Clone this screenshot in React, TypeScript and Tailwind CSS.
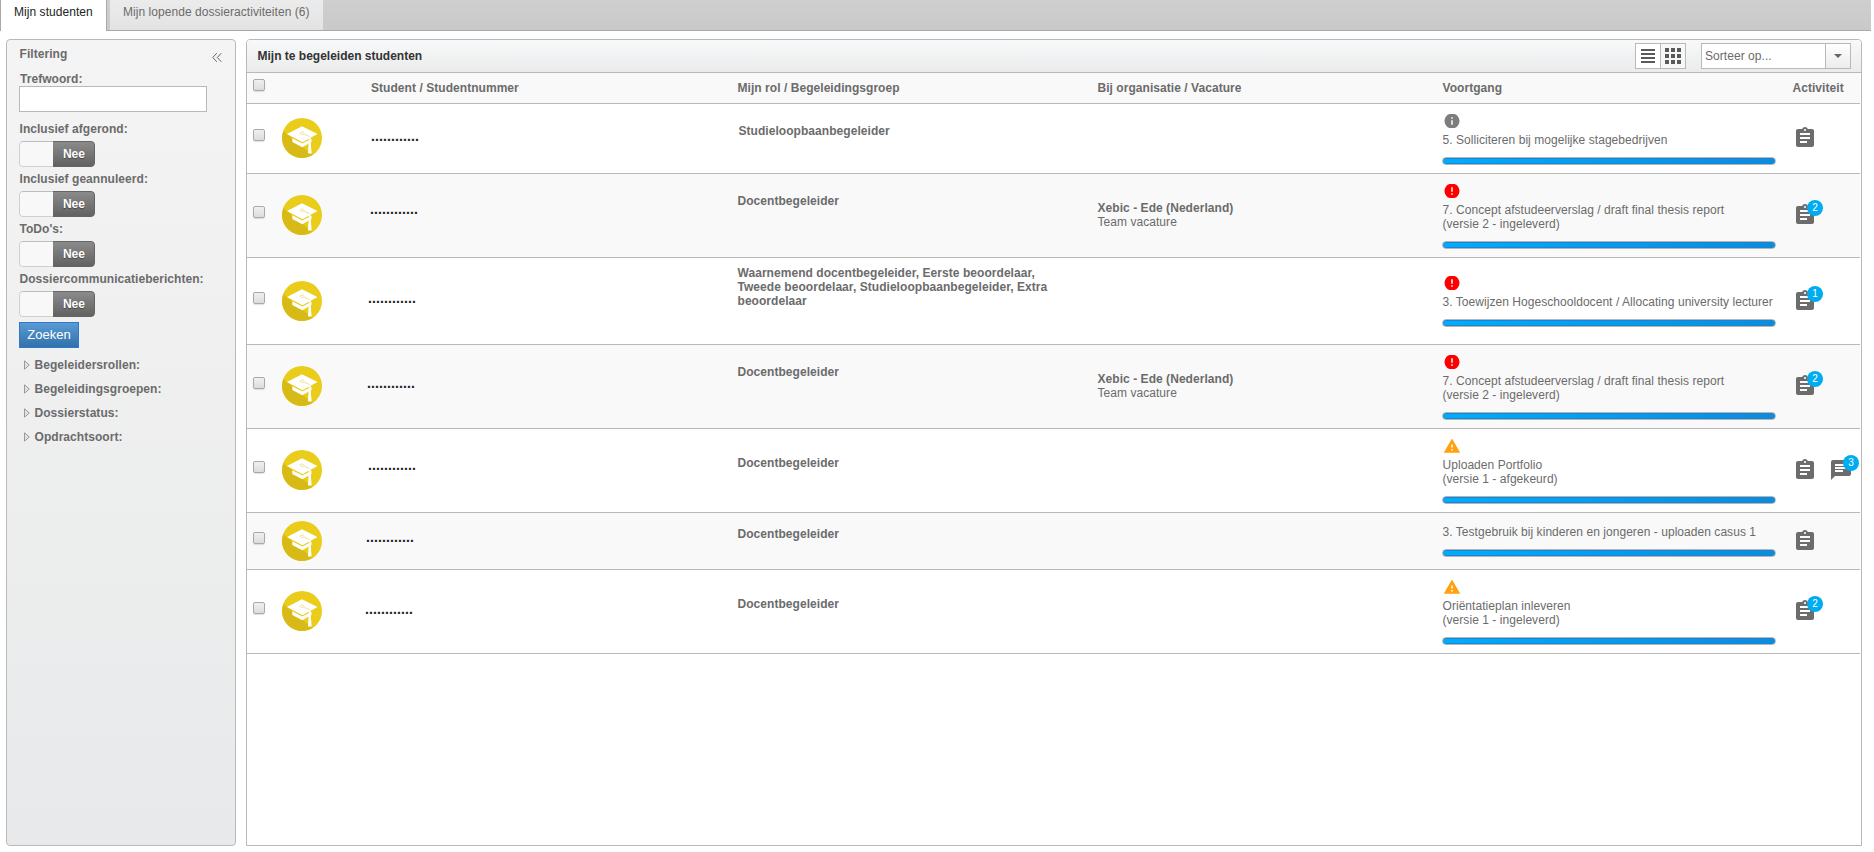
import { MdAssignment, MdChat, MdError, MdInfo, MdWarning } from 'react-icons/md';

type Status = 'info' | 'error' | 'warning' | null;

interface StudentRow {
  height: string;
  pad: string;
  namePad: string;
  role: string;
  rolePad: string;
  organisation?: string;
  vacancy?: string;
  status: Status;
  progress: string[];
  progressPad: string;
  tasks?: number;
  messages?: number;
}

const rows: StudentRow[] = [
  {
    height: 'h-[70px]',
    pad: 'pt-[14px]',
    namePad: 'pt-[25px] -ml-px',
    role: 'Studieloopbaanbegeleider',
    rolePad: 'pt-[20px] pl-px',
    status: 'info',
    progress: ['5. Solliciteren bij mogelijke stagebedrijven'],
    progressPad: 'pt-[10px]',
  },
  {
    height: 'h-[84px]',
    pad: 'pt-[21px]',
    namePad: 'pt-[28px] -ml-[2px]',
    role: 'Docentbegeleider',
    rolePad: 'pt-[20px]',
    organisation: 'Xebic - Ede (Nederland)',
    vacancy: 'Team vacature',
    status: 'error',
    progress: ['7. Concept afstudeerverslag / draft final thesis report', '(versie 2 - ingeleverd)'],
    progressPad: 'pt-[10px]',
    tasks: 2,
  },
  {
    height: 'h-[87px]',
    pad: 'pt-[23px]',
    namePad: 'pt-[33px] -ml-[4px]',
    role: 'Waarnemend docentbegeleider, Eerste beoordelaar, Tweede beoordelaar, Studieloopbaanbegeleider, Extra beoordelaar',
    rolePad: 'pt-[8px]',
    status: 'error',
    progress: ['3. Toewijzen Hogeschooldocent / Allocating university lecturer'],
    progressPad: 'pt-[18px]',
    tasks: 1,
  },
  {
    height: 'h-[84px]',
    pad: 'pt-[21px]',
    namePad: 'pt-[31px] -ml-[5px]',
    role: 'Docentbegeleider',
    rolePad: 'pt-[20px]',
    organisation: 'Xebic - Ede (Nederland)',
    vacancy: 'Team vacature',
    status: 'error',
    progress: ['7. Concept afstudeerverslag / draft final thesis report', '(versie 2 - ingeleverd)'],
    progressPad: 'pt-[10px]',
    tasks: 2,
  },
  {
    height: 'h-[84px]',
    pad: 'pt-[21px]',
    namePad: 'pt-[29px] -ml-[4px]',
    role: 'Docentbegeleider',
    rolePad: 'pt-[27px]',
    status: 'warning',
    progress: ['Uploaden Portfolio', '(versie 1 - afgekeurd)'],
    progressPad: 'pt-[10px]',
    messages: 3,
  },
  {
    height: 'h-[57px]',
    pad: 'pt-[8px]',
    namePad: 'pt-[17px] -ml-[6px]',
    role: 'Docentbegeleider',
    rolePad: 'pt-[14px]',
    status: null,
    progress: ['3. Testgebruik bij kinderen en jongeren - uploaden casus 1'],
    progressPad: 'pt-[12px]',
  },
  {
    height: 'h-[84px]',
    pad: 'pt-[21px]',
    namePad: 'pt-[32px] -ml-[7px]',
    role: 'Docentbegeleider',
    rolePad: 'pt-[27px]',
    status: 'warning',
    progress: ['Oriëntatieplan inleveren', '(versie 1 - ingeleverd)'],
    progressPad: 'pt-[10px]',
    tasks: 2,
  },
];

const toggles = ['Inclusief afgerond:', 'Inclusief geannuleerd:', "ToDo's:", 'Dossiercommunicatieberichten:'];
const groups = ['Begeleidersrollen:', 'Begeleidingsgroepen:', 'Dossierstatus:', 'Opdrachtsoort:'];

const columns =
  'grid grid-cols-[35px_90px_365.5px_360px_344.5px_350.5px_67.5px] w-[1613px] shrink-0 border-b border-[#b9b9b9]';

function Checkbox() {
  return (
    <span className="block w-3 h-3 rounded-[2px] border border-[#a9a9a9] bg-linear-to-b from-[#f0f0f0] to-[#dcdcdc] shadow-[0_1px_1px_rgba(0,0,0,0.12)]" />
  );
}

function StudentAvatar() {
  return (
    <svg width="40" height="40" viewBox="0 0 40 40">
      <circle cx="20" cy="20" r="20" fill="#e9cd1a" />
      <path d="M5 16 L1.3 13 A20 20 0 0 0 31 36.7 L28 35 Z" fill="#d8ba17" />
      <path d="M20 8.2 L35.5 16 L20.5 24.2 L5 16 Z" fill="#fff" />
      <path d="M10.3 20.2 L20.3 25.5 L29.5 20.7 V24 L20.3 29.3 L10.3 24 Z" fill="#fff" />
      <path d="M18.5 15.5 c-1-1.6 2.5-2 3.5-.6 s-2.6 2.6-3.5.6 M22.5 16.5 l6 2.4" fill="none" stroke="#e9d877" strokeWidth="0.8" />
      <path d="M27 18.6 L28.4 18.6 L29.6 35.5 H26 Z" fill="#fff" />
    </svg>
  );
}

function StatusIcon({ status }: { status: Status }) {
  if (!status) return null;
  return (
    <div className="flex items-center h-[14px] mb-[5px] pl-[0.5px] overflow-hidden">
      {status === 'info' && <MdInfo size={18} className="shrink-0 text-[#7d7d7d]" />}
      {status === 'error' && <MdError size={18} className="shrink-0 text-[#ff0000]" />}
      {status === 'warning' && <MdWarning size={18} className="shrink-0 text-[#ffa20d]" />}
    </div>
  );
}

function Badge({ count }: { count: number }) {
  return (
    <span className="absolute left-[14px] -top-[3px] w-4 h-4 rounded-full bg-[#00acf0] text-white text-[10px] leading-4 text-center">
      {count}
    </span>
  );
}

function Toggle() {
  return (
    <div className="flex w-[76px] h-[26px] rounded-[4px] overflow-hidden">
      <div className="w-[34px] rounded-l-[4px] border border-r-0 border-[#cfcfcf] border-t-[#bdbdbd] bg-[#f8f8f8]" />
      <div className="flex-1 rounded-r-[4px] border border-l-0 border-[#656565] bg-linear-to-b from-[#8b8b8b] to-[#626262] text-white font-bold leading-6 text-center pl-px [text-shadow:0_1px_1px_#444]">
        Nee
      </div>
    </div>
  );
}

function FilterPanel() {
  return (
    <aside className="w-[230px] h-[807px] shrink-0 border border-[#b9b9b9] rounded-[4px] bg-linear-to-b from-[#f4f4f4] to-[#e8e9ea] px-3 font-bold">
      <div className="flex justify-between pt-[7px] h-[32px]">
        <span className="pl-[0.5px]">Filtering</span>
        <svg className="mt-[6px] mr-px" width="10" height="9" viewBox="0 0 10 9" fill="none" stroke="#666">
          <path d="M4.8 0.2 L0.8 4.5 L4.8 8.8 M9.3 0.2 L5.3 4.5 L9.3 8.8" />
        </svg>
      </div>
      <label className="block pl-px leading-[14px]">Trefwoord:</label>
      <div className="w-[188px] h-[26px] border border-[#b9b9b9] bg-white mb-[10px]" />
      {toggles.map((label) => (
        <div key={label} className="h-[50px]">
          <div className="leading-[14px] mb-[5px] pl-[0.5px]">{label}</div>
          <Toggle />
        </div>
      ))}
      <button className="block w-[60px] h-[26px] border border-[#2f77cf] bg-linear-to-b from-[#5b9bd3] to-[#3071aa] text-white text-[13px] leading-6 font-normal">
        Zoeken
      </button>
      <ul className="pt-[5px]">
        {groups.map((group) => (
          <li key={group} className="flex items-center h-6 pl-[5px] gap-[4.5px]">
            <svg width="6" height="10" viewBox="0 0 6 10" fill="#e2e2e2" stroke="#9a9a9a">
              <path d="M0.5 0.8 L5.3 5 L0.5 9.2 Z" />
            </svg>
            {group}
          </li>
        ))}
      </ul>
    </aside>
  );
}

function Toolbar() {
  return (
    <div className="flex items-center h-[33px] shrink-0 rounded-t-[3px] border-b border-[#b9b9b9] bg-linear-to-b from-[#f7f9fa] to-[#ebebeb] px-[10px]">
      <h2 className="flex-1 font-bold text-[#333] tracking-normal pb-px pl-[0.5px]">Mijn te begeleiden studenten</h2>
      <div className="flex w-[51px] h-[26px] border border-[#b9b9b9] mr-[15px] bg-white">
        <div className="w-[25px] flex items-center justify-center border-r border-[#b9b9b9]">
          <svg width="14" height="14" viewBox="0 0 14 14" fill="#5a5a5a" shapeRendering="crispEdges">
            <path d="M0 0h14v2H0zM0 4h14v2H0zM0 8h14v2H0zM0 12h14v2H0z" />
          </svg>
        </div>
        <div className="flex-1 flex items-center justify-center bg-[#f7f7f7]">
          <svg width="16" height="16" viewBox="0 0 16 16" fill="#5a5a5a" shapeRendering="crispEdges">
            <path d="M0 0h4v4H0zM6 0h4v4H6zM12 0h4v4h-4zM0 6h4v4H0zM6 6h4v4H6zM12 6h4v4h-4zM0 12h4v4H0zM6 12h4v4H6zM12 12h4v4h-4z" />
          </svg>
        </div>
      </div>
      <div className="flex w-[150px] h-[26px] border border-[#b9b9b9] bg-white">
        <span className="flex-1 pl-[3px] leading-6">Sorteer op...</span>
        <span className="w-[25px] flex items-center justify-center border-l border-[#b9b9b9] bg-linear-to-b from-white to-[#ececec]">
          <svg width="8" height="4" viewBox="0 0 8 4" fill="#666">
            <path d="M0 0h8L4 4z" />
          </svg>
        </span>
      </div>
    </div>
  );
}

function Row({ row, striped }: { row: StudentRow; striped: boolean }) {
  return (
    <div className={`${columns} ${row.height} ${striped ? 'bg-[#f9f9f9]' : 'bg-white'}`}>
      <div className={row.pad}>
        <div className="pl-[6px] pt-[11px]">
          <Checkbox />
        </div>
      </div>
      <div className={row.pad}>
        <StudentAvatar />
      </div>
      <div className={row.namePad}>
        <div className="text-[14px] leading-[14px] tracking-[0.11px] font-bold text-[#222]">............</div>
      </div>
      <div className={`${row.rolePad} w-[320px] font-bold`}>{row.role}</div>
      <div className="flex flex-col justify-center pb-px">
        <div className="font-bold">{row.organisation}</div>
        <div>{row.vacancy}</div>
      </div>
      <div className={row.progressPad}>
        <StatusIcon status={row.status} />
        {row.progress.map((line) => (
          <div key={line} className="whitespace-nowrap pl-[0.5px]">
            {line}
          </div>
        ))}
        <div className="mt-[10px] w-[334px] h-2 rounded-[4px] border border-[#b5b5b5] bg-linear-to-r from-[#00acff] to-[#0a8ce0] shadow-[inset_0_1px_0_#1a86cf,inset_0_-1px_0_#1a86cf]" />
      </div>
      <div className={row.pad}>
        <div className="flex items-center gap-3 h-10 pl-[0.5px] text-[#6c6c6c]">
          <div className="relative shrink-0">
            <MdAssignment size={24} />
            {row.tasks && <Badge count={row.tasks} />}
          </div>
          {row.messages && (
            <div className="relative shrink-0">
              <MdChat size={24} />
              <Badge count={row.messages} />
            </div>
          )}
        </div>
      </div>
    </div>
  );
}

export default function App() {
  return (
    <div className="w-[1874px] h-[852px] bg-white overflow-hidden font-['Liberation_Sans',Arial,sans-serif] text-[12px] leading-[14px] tracking-[0.05px] text-[#6b6b6b]">
      {/* Tabs */}
      <nav className="flex w-[1871px] h-[31px] bg-linear-to-b from-[#cfcfcf] to-[#c9c9c9]">
        <div className="w-[107px] border-x border-[#a9a9a9] bg-white text-[#222] pl-[13px] pt-[5px]">Mijn studenten</div>
        <div className="flex-1 flex pl-[3px] border-b border-[#a9a9a9]">
          <div className="w-[213px] bg-linear-to-b from-[#ebebeb] via-[#e8e8e8] to-[#e2e2e2] pl-[13px] pt-[5px]">
            Mijn lopende dossieractiviteiten (6)
          </div>
        </div>
      </nav>

      <div className="flex gap-[10px] pl-[6px] pt-2">
        <FilterPanel />
        <main className="flex flex-col w-[1616px] h-[807px] border border-[#b9b9b9] rounded-t-[4px] bg-white">
          <Toolbar />
          <div className={`${columns} h-[31px] bg-[#f9f9f9] font-bold`}>
            <div className="pl-[6px] pt-[6px]">
              <Checkbox />
            </div>
            <div />
            <div className="pt-2 -ml-px">Student / Studentnummer</div>
            <div className="pt-2">Mijn rol / Begeleidingsgroep</div>
            <div className="pt-2">Bij organisatie / Vacature</div>
            <div className="pt-2 pl-[0.5px]">Voortgang</div>
            <div className="pt-2">Activiteit</div>
          </div>
          {rows.map((row, index) => (
            <Row key={index} row={row} striped={index % 2 === 1} />
          ))}
        </main>
      </div>
    </div>
  );
}
